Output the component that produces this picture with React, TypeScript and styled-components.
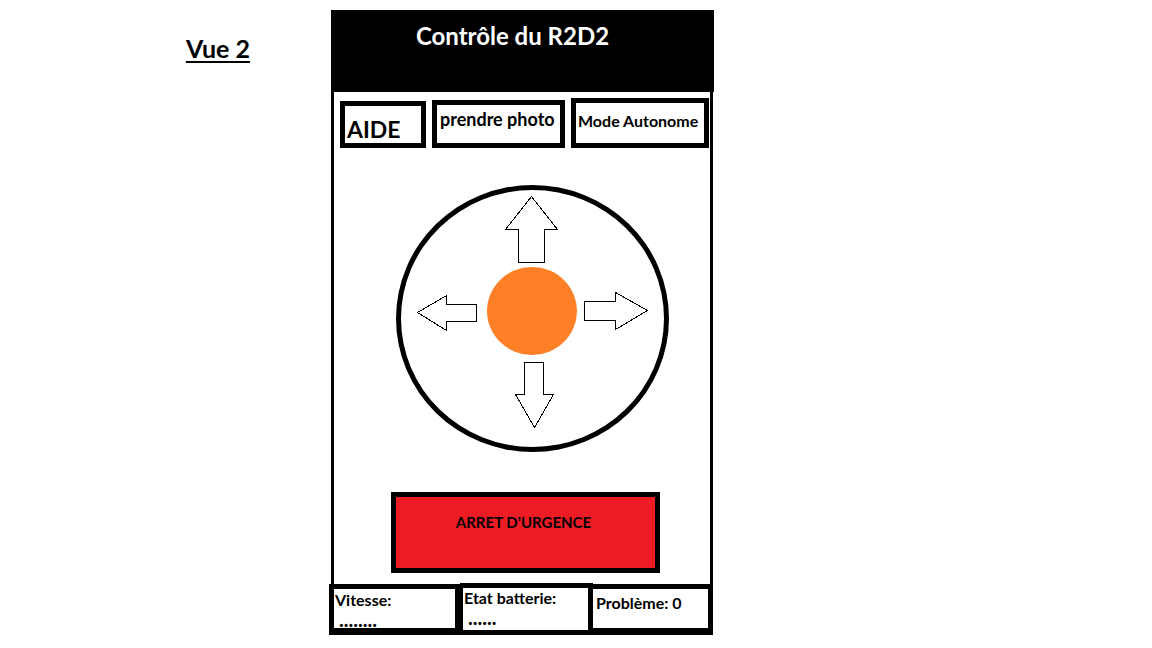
import React from "react";
import styled, { createGlobalStyle } from "styled-components";

const GlobalStyle = createGlobalStyle`
  *, *::before, *::after { box-sizing: border-box; }
  body {
    margin: 0;
    background: #fff;
    color: #000;
    font-family: Lato, "Liberation Sans", sans-serif;
    font-weight: 700;
  }
`;

const Page = styled.main`
  display: grid;
  grid-template-columns: 329fr minmax(320px, 384px) 439fr;
  align-items: start;
  padding: 10px 0 13px;
`;

const ViewLabel = styled.h2`
  margin: 22px 79px 0 0;
  font-size: 25px;
  line-height: 32px;
  text-align: right;
  text-decoration: underline;
  text-decoration-thickness: 2px;
  text-underline-offset: 3px;
  text-decoration-skip-ink: none;
`;

const Phone = styled.section`
  display: flex;
  flex-direction: column;
`;

const Header = styled.header`
  margin: 0 -1px 0 2px;
  padding: 10px 20px 40px 0;
  background: #000;
  color: #fff;
`;

const Title = styled.h1`
  margin: 0;
  font-size: 24px;
  line-height: 32px;
  text-align: center;
`;

const Screen = styled.div`
  display: flex;
  flex-direction: column;
  margin-left: 2px;
  border: solid #000;
  border-width: 0 3px;
`;

const Toolbar = styled.nav`
  display: grid;
  grid-template-columns: 86fr 133fr 138fr;
  align-items: end;
  gap: 6px;
  padding: 6px 1px 0 6px;
`;

const ToolButton = styled.button<{ $height: number; $size: number; $pad: string }>`
  display: flex;
  height: ${(p) => p.$height}px;
  padding: ${(p) => p.$pad};
  border: 5px solid #000;
  background: #fff;
  color: #000;
  font: 700 ${(p) => p.$size}px/20px Lato, "Liberation Sans", sans-serif;
  text-align: left;
  white-space: nowrap;
`;

const Dial = styled.div`
  display: flex;
  flex-direction: column;
  align-items: center;
  align-self: center;
  gap: 2px;
  width: 273px;
  height: 267px;
  margin: 37px 0 40px 21px;
  padding-top: 5px;
  border: 5px solid #000;
  border-radius: 50%;
`;

const DialRow = styled.div`
  display: flex;
  gap: 4px;
`;

const ArrowButton = styled.button`
  display: block;
  padding: 0;
  border: 0;
  background: none;

  svg {
    display: block;
    fill: #fff;
    stroke: #000;
    stroke-width: 1px;
    shape-rendering: crispEdges;
  }
`;

const Knob = styled.button`
  width: 90px;
  height: 88px;
  padding: 0;
  border: 0;
  border-radius: 50%;
  background: #ff7f27;
`;

const StopButton = styled.button`
  margin: 0 50px 11px 57px;
  height: 81px;
  padding: 0 4px 22px 0;
  border: 5px solid #000;
  background: #ed1c24;
  color: #000;
  font: 700 15px/20px Lato, "Liberation Sans", sans-serif;
`;

const StatusBar = styled.footer`
  display: grid;
  grid-template-columns: 131fr 133fr 120fr;
  align-items: end;
  margin-top: -1px;
`;

const StatusCell = styled.div<{ $height: number; $borders: string; $pad: string }>`
  height: ${(p) => p.$height}px;
  padding: ${(p) => p.$pad};
  border: solid #000;
  border-width: ${(p) => p.$borders};
  font-size: 16px;
  line-height: 20px;
`;

const Value = styled.div`
  padding-left: 4px;
  font-size: 20px;
  line-height: 18px;
`;

type ArrowProps = { label: string; width: number; height: number; points: string };

function Arrow({ label, width, height, points }: ArrowProps) {
  return (
    <ArrowButton type="button" aria-label={label}>
      <svg width={width} height={height} viewBox={`0 0 ${width} ${height}`} aria-hidden="true">
        <polygon points={points} />
      </svg>
    </ArrowButton>
  );
}

export default function App() {
  return (
    <>
      <GlobalStyle />
      <Page>
        <ViewLabel>Vue 2</ViewLabel>
        <Phone>
          <Header>
            <Title>Contrôle du R2D2</Title>
          </Header>
          <Screen>
            <Toolbar>
              <ToolButton type="button" $height={47} $size={23} $pad="13px 0 0 2px">
                AIDE
              </ToolButton>
              <ToolButton type="button" $height={48} $size={18} $pad="4px 0 0 3px">
                prendre photo
              </ToolButton>
              <ToolButton type="button" $height={50} $size={16} $pad="8px 0 0 2px">
                Mode Autonome
              </ToolButton>
            </Toolbar>
            <Dial>
              <Arrow
                label="Avancer"
                width={55}
                height={70}
                points="26.5,1.5 52.5,34.5 39.5,34.5 39.5,67.5 13.5,67.5 13.5,34.5 0.5,34.5"
              />
              <DialRow>
                <Arrow
                  label="Gauche"
                  width={67}
                  height={88}
                  points="1.5,45.5 30.5,28.5 30.5,37.5 60.5,37.5 60.5,54.5 30.5,54.5 30.5,63.5"
                />
                <Knob type="button" aria-label="Centre" />
                <Arrow
                  label="Droite"
                  width={68}
                  height={88}
                  points="3.5,34.5 34.5,34.5 34.5,25.5 66.5,43.5 34.5,62.5 34.5,53.5 3.5,53.5"
                />
              </DialRow>
              <Arrow
                label="Reculer"
                width={55}
                height={72}
                points="19.5,5.5 38.5,5.5 38.5,37.5 48.5,37.5 29.5,70.5 10.5,37.5 19.5,37.5"
              />
            </Dial>
            <StopButton type="button">ARRET D'URGENCE</StopButton>
          </Screen>
          <StatusBar>
            <StatusCell $height={51} $borders="5px 5px 7px" $pad="1px 0 0 1px">
              Vitesse:
              <Value>........</Value>
            </StatusCell>
            <StatusCell $height={52} $borders="5px 5px 5px 3px" $pad="0 0 0 1px">
              Etat batterie:
              <Value>......</Value>
            </StatusCell>
            <StatusCell $height={51} $borders="5px 5px 7px 0" $pad="4px 0 0 3px">
              Problème: 0
            </StatusCell>
          </StatusBar>
        </Phone>
      </Page>
    </>
  );
}
